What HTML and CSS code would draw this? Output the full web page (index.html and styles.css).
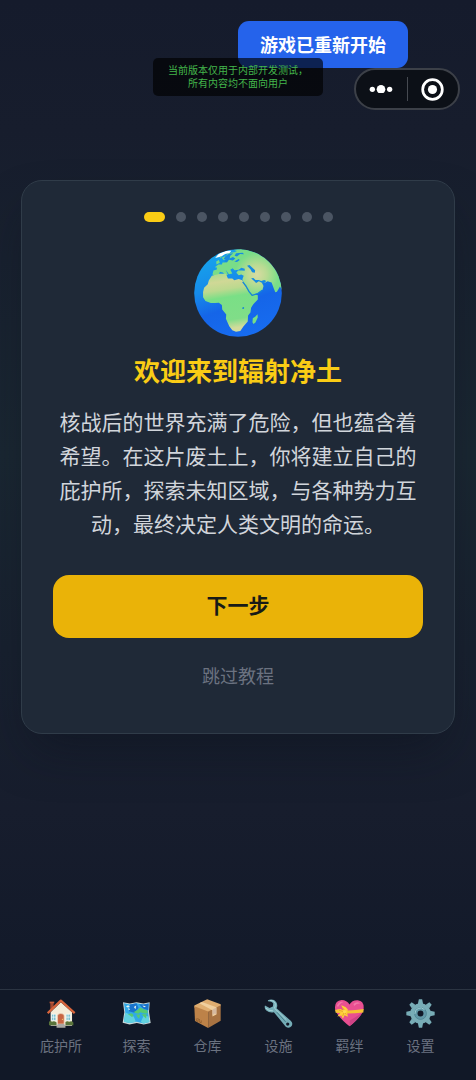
FILE: index.html
```html
<!DOCTYPE html>
<html lang="zh-CN">
<head>
<meta charset="utf-8">
<meta name="viewport" content="width=device-width, initial-scale=1">
<title>辐射净土</title>
<link rel="stylesheet" href="styles.css">
</head>
<body>
<div class="screen">
  <div class="toast" role="status">游戏已重新开始</div>
  <p class="notice">当前版本仅用于内部开发测试，<br>所有内容均不面向用户</p>
  <div class="capsule">
    <button class="capsule-button" type="button" aria-label="更多">
      <svg class="more-icon" viewBox="0 0 72 26"><circle cx="10" cy="13" r="8"/><circle cx="36" cy="13" r="13"/><circle cx="62" cy="13" r="8"/></svg>
    </button>
    <button class="capsule-button" type="button" aria-label="关闭">
      <svg class="close-icon" viewBox="0 0 68 68"><circle cx="34" cy="34" r="29" fill="none" stroke="#fff" stroke-width="8"/><circle cx="34" cy="34" r="13.5"/></svg>
    </button>
  </div>

  <main class="main">
    <section class="card">
      <div class="steps">
        <span class="step step-active"></span><span class="step"></span><span class="step"></span><span class="step"></span><span class="step"></span><span class="step"></span><span class="step"></span><span class="step"></span><span class="step"></span>
      </div>
      <svg class="globe" viewBox="43 27 262 262" aria-hidden="true">
        <defs>
          <linearGradient id="sea" x1="0.2" y1="0" x2="0.55" y2="1"><stop offset="0" stop-color="#16a8ec"/><stop offset=".4" stop-color="#168bea"/><stop offset=".65" stop-color="#1565e8"/><stop offset="1" stop-color="#176cf0"/></linearGradient>
          <linearGradient id="africa" x1="0" y1="0" x2=".15" y2="1"><stop offset="0" stop-color="#a3dc8a"/><stop offset=".18" stop-color="#d0d896"/><stop offset=".32" stop-color="#bcd98f"/><stop offset=".46" stop-color="#7adf86"/><stop offset=".85" stop-color="#80dd88"/><stop offset="1" stop-color="#d3dc9b"/></linearGradient>
          <radialGradient id="asia" gradientUnits="userSpaceOnUse" cx="230" cy="103" r="65"><stop offset="0" stop-color="#d9dba2"/><stop offset=".45" stop-color="#b9db93"/><stop offset="1" stop-color="#79dd88"/></radialGradient>
          <clipPath id="disc"><circle cx="174" cy="158" r="130.5"/></clipPath>
        </defs>
        <g clip-path="url(#disc)">
          <rect x="40" y="24" width="270" height="270" fill="url(#sea)"/>
          <path fill="url(#asia)" d="M182 27H305V150L299 139L290 154L285 156L280 143L274 127L262 123L253 128L244 125L250 137L247 148L233 159L218 165L209 157L200 145L190 126L187 117L191 107L184 103L176 105L169 98L174 91L184 91L194 92L194 86L184 83L176 89L164 90L158 84L151 89L157 100L147 102L137 89L144 103L138 107L129 97L120 95L117 103L105 107L98 103L101 91L111 88L111 82L105 81L116 73L126 73L128 67L137 67L142 57L130 59L126 53L137 48L146 39L163 37L173 32Z"/>
          <path fill="#fff" d="M106 54L117 41L139 32L154 32L149 39L136 42L124 49Z"/>
          <path fill="#78da87" d="M109 64L117 60L120 68L110 73ZM119 51L126 48L123 54ZM161 29L184 27L188 34L172 34Z"/>
          <path fill="#168ce2" d="M137 48L147 41L160 40L151 47L149 55L159 51L166 55L159 61L147 59L141 67L134 65L137 57L131 57ZM168 40L188 38L192 43L180 42L171 49L164 47ZM163 64L176 57L179 60L171 66ZM201 77L208 75L225 90L224 98L216 96L211 87ZM213 114L220 113L226 119L236 119L243 122L252 119L258 122L251 130L242 126L236 123L228 128Z"/>
          <path fill="url(#africa)" d="M96 107L120 101L138 101L144 115L157 115L163 120L176 116L187 120L201 146L211 158L233 165L233 177L219 192L213 202L211 216L204 225L203 243L190 258L181 271L168 273L157 269L148 257L138 235L139 222L127 207L126 194L117 187L105 188L93 188L77 182L70 171L70 155L73 142L84 132L87 121Z"/>
          <path fill="none" stroke="#1686d8" stroke-width="4" stroke-linejoin="round" d="M188 125L198 138L207 154L216 165L232 160L246 150"/>
          <path fill="#76dd87" d="M217 245L218 233L226 228L232 221L233 230L226 246L220 250Z"/>
          <path fill="#1684d8" d="M187 201L192 200L192 205L187 206Z"/>
        </g>
      </svg>
      <h1 class="title">欢迎来到辐射净土</h1>
      <p class="text">核战后的世界充满了危险，但也蕴含着希望。在这片废土上，你将建立自己的庇护所，探索未知区域，与各种势力互动，最终决定人类文明的命运。</p>
      <button class="next" type="button">下一步</button>
      <button class="skip" type="button">跳过教程</button>
    </section>
  </main>

  <nav class="tabs">
    <a class="tab" href="#shelter">
      <svg class="tab-icon" viewBox="142 57 88 88" aria-hidden="true">
        <path fill="#a4492f" d="M152 66H162V91H152Z"/><path fill="#c45b3c" d="M150 65H164V70H150Z"/>
        <path fill="#f5ecd8" d="M153 97L184 67L218 97V138H153Z"/>
        <path fill="none" stroke="#d9653b" stroke-width="7" stroke-linejoin="round" d="M144 100L184 62L226 100"/>
        <path fill="#70bcca" stroke="#fff" stroke-width="2" d="M156 103H169V122H156ZM200 103H213V122H200Z"/><path stroke="#fff" stroke-width="2" d="M162 103V122M206 103V122M156 112H169M200 112H213"/>
        <path fill="#c86543" stroke="#ead8c0" stroke-width="2" d="M174 133V108Q175 101 184 101Q193 101 194 108V133Z"/><circle cx="189" cy="119" r="2" fill="#eabf65"/>
        <path fill="#a9a6a3" d="M174 133H195V138H198V144H171V138H174Z"/>
        <path fill="#58733a" d="M148 126Q153 122 157 126Q163 122 171 128V137H148ZM198 127Q203 123 209 126Q217 122 222 128V137H198Z"/>
      </svg>
      <span>庇护所</span>
    </a>
    <a class="tab" href="#explore">
      <svg class="tab-icon" viewBox="369 57 88 88" aria-hidden="true">
        <path fill="#c8d9db" d="M372 67L393 71L413 67L434 71L453 67L451 96L456 130L435 134L414 130L392 134L371 129L376 97Z"/>
        <path fill="#31a9e8" d="M375 70L393 74L413 70L434 74L450 71L448 96L452 127L435 131L414 126L392 130L375 126L379 97Z"/>
        <path fill="#1973cd" d="M393 74L413 70L419 84L407 99L390 94ZM421 73L434 74L450 71L449 91L436 87L428 81Z"/>
        <path fill="#62d2df" d="M379 98L392 103L405 111L411 126L392 130L375 126ZM435 107L450 110L452 127L435 131L426 127Z"/>
        <path fill="#55ca73" d="M404 97L416 90L424 83L433 87L446 92L447 100L436 101L425 97L418 102ZM387 103L397 100L404 105L400 112L394 108ZM412 105L424 104L421 117L416 112ZM428 103L444 103L442 116L436 111Z"/>
        <path fill="#e6f4ef" d="M381 79L388 76L393 81L386 83ZM405 81L412 77L410 88ZM431 77L442 79L436 82ZM388 84L394 88L389 91Z"/>
      </svg>
      <span>探索</span>
    </a>
    <a class="tab" href="#storage">
      <svg class="tab-icon" viewBox="581 56 88 88" aria-hidden="true">
        <path fill="#dfad70" d="M585 76L624 57L665 72L665 77L625 97L585 82Z"/>
        <path fill="#bd8248" d="M585 78L627 94V144L587 123Z"/><path fill="#a87342" d="M627 94L665 75V122L627 144Z"/>
        <path fill="#f0cf9e" d="M600 69L608 65L652 81V103L640 109V90Z"/><path fill="#d5b9a0" d="M640 88L652 82V102L646 100L640 106Z"/>
        <path fill="none" stroke="#835528" stroke-width="2" d="M591 115V122L596 124V118M594 115L602 119M600 119V126L606 128V121"/>
      </svg>
      <span>仓库</span>
    </a>
    <a class="tab" href="#facilities">
      <svg class="tab-icon" viewBox="85 56 88 88" aria-hidden="true">
        <path fill="#75adb7" fill-rule="evenodd" d="M97 60Q113 54 122 65Q128 75 123 84L166 122Q174 129 169 138Q161 147 151 140L115 96Q102 99 92 91Q85 85 88 76L102 83L112 79L113 70Q109 63 97 63ZM157 127A5 5 0 1 0 157 137A5 5 0 1 0 157 127Z"/>
        <path fill="none" stroke="#a7d3d9" stroke-width="3" stroke-linecap="round" d="M104 60Q116 60 119 69Q120 78 117 84L152 118M91 84Q99 93 111 92"/>
        <path stroke="#467f8c" stroke-width="3" d="M124 96L151 126"/>
      </svg>
      <span>设施</span>
    </a>
    <a class="tab" href="#bonds">
      <svg class="tab-icon" viewBox="297 56 88 88" aria-hidden="true">
        <path fill="#e94f91" d="M341 139Q300 106 297 84Q296 61 317 59Q333 59 341 73Q349 59 366 60Q385 62 384 84Q382 106 341 139Z"/>
        <path fill="#f895b8" opacity=".6" d="M303 76Q309 62 323 65Q311 69 306 81ZM353 71Q364 62 374 70Q364 68 355 77Z"/><path fill="#cf4386" d="M341 139Q373 113 380 96Q366 108 342 121Z"/>
        <path fill="#f6c332" d="M297 88Q318 94 384 86L383 97Q336 103 299 98Z"/>
        <path fill="#ffcf38" d="M323 91L316 75L329 80L336 88L334 98L336 110L326 105L321 116L316 106L304 109L315 96L302 88L314 86Z"/>
        <path fill="none" stroke="#d8922b" stroke-width="2" d="M320 82L327 92L320 108M309 90L324 95L331 103"/><circle cx="326" cy="94" r="5" fill="#ffda50"/>
      </svg>
      <span>羁绊</span>
    </a>
    <a class="tab" href="#settings">
      <svg class="tab-icon" viewBox="509 56 88 88" aria-hidden="true">
        <g fill="#78adb7"><circle cx="553" cy="100" r="31"/>
          <path id="tooth" d="M545 71L548 57H558L561 71Z"/><use href="#tooth" transform="rotate(45 553 100)"/><use href="#tooth" transform="rotate(90 553 100)"/><use href="#tooth" transform="rotate(135 553 100)"/><use href="#tooth" transform="rotate(180 553 100)"/><use href="#tooth" transform="rotate(225 553 100)"/><use href="#tooth" transform="rotate(270 553 100)"/><use href="#tooth" transform="rotate(315 553 100)"/></g>
        <circle cx="553" cy="100" r="18" fill="#6298a7" stroke="#447b8b" stroke-width="2"/><path fill="none" stroke="#a0cfd5" stroke-width="3" d="M536 101A17 17 0 0 1 565 88"/><circle cx="553" cy="100" r="9" fill="#111827"/>
      </svg>
      <span>设置</span>
    </a>
  </nav>
</div>
</body>
</html>
```
FILE: styles.css
```css
* { box-sizing: border-box; }

body {
  margin: 0;
  background: #111827;
  font-family: "Noto Sans CJK SC", "Noto Sans", sans-serif;
}

button {
  border: 0;
  padding: 0;
  background: none;
  color: inherit;
  font-family: inherit;
  cursor: pointer;
}

svg { display: block; }

.screen {
  position: relative;
  display: flex;
  flex-direction: column;
  min-height: 100vh;
  background: linear-gradient(180deg, #151b2c 0%, #171d2d 12%, #1a2732 42%, #18212f 60%, #171d2d 75%, #131a2a 88%, #111827 100%);
}

.toast {
  position: absolute;
  top: 21px;
  right: 68px;
  padding: 10px 22px 11px;
  border-radius: 11px;
  background: #2563eb;
  color: #fff;
  font-size: 18px;
  font-weight: 700;
  line-height: 26px;
}

.notice {
  position: absolute;
  top: 58px;
  left: 50%;
  transform: translateX(-50%);
  margin: 0;
  padding: 5px 15px 7px;
  border-radius: 5px;
  background: rgba(0, 0, 0, 0.65);
  color: #43b64b;
  font-size: 10px;
  line-height: 13px;
  text-align: center;
  white-space: nowrap;
}

.capsule {
  position: absolute;
  top: 68px;
  right: 16px;
  display: flex;
  width: 106px;
  height: 42px;
  padding: 7px 0;
  border: 2px solid #3c4048;
  border-radius: 21px;
  background: #0c1017;
}

.capsule-button {
  display: flex;
  flex: 1;
  align-items: center;
  justify-content: center;
}

.capsule-button + .capsule-button { border-left: 1px solid #464a51; }
.more-icon { width: 24px; fill: #fff; }
.close-icon { width: 23px; fill: #fff; }

.main {
  flex: 1;
  padding: 180px 21px 64px;
}

.card {
  display: flex;
  flex-direction: column;
  align-items: center;
  padding: 31px 31px 32px;
  border: 1px solid #303c49;
  border-radius: 21px;
  background: #1f2937;
  box-shadow: 0 24px 48px -12px rgba(12, 16, 28, 0.5);
}

.steps {
  display: flex;
  gap: 11px;
  margin-bottom: 27px;
}

.step {
  width: 10px;
  height: 10px;
  border-radius: 5px;
  background: #4b5563;
}

.step-active {
  width: 21px;
  background: #facc15;
}

.globe {
  width: 88px;
  height: 88px;
}

.title {
  margin: 14px 0 16px;
  color: #facc15;
  font-size: 26px;
  font-weight: 700;
  line-height: 37px;
}

.text {
  margin: 0 0 35px;
  color: #d1d5db;
  font-size: 21px;
  line-height: 34px;
  text-align: center;
}

.next {
  width: 100%;
  padding: 14px 16px 18px;
  border-radius: 16px;
  background: #eab308;
  color: #171a17;
  font-size: 21px;
  font-weight: 700;
  line-height: 31px;
}

.skip {
  margin-top: 14px;
  padding: 10px 16px 12px;
  color: #6b7280;
  font-size: 18px;
  line-height: 27px;
}

.tabs {
  display: flex;
  justify-content: space-around;
  padding: 9px 20px 24px 21px;
  border-top: 1px solid #2b3442;
  background: #111827;
}

.tab {
  display: flex;
  flex-direction: column;
  align-items: center;
  gap: 7px;
  min-width: 33px;
  color: #6b7280;
  font-size: 14px;
  line-height: 21px;
  text-decoration: none;
}

.tab-icon {
  width: 29px;
  height: 29px;
}
```
